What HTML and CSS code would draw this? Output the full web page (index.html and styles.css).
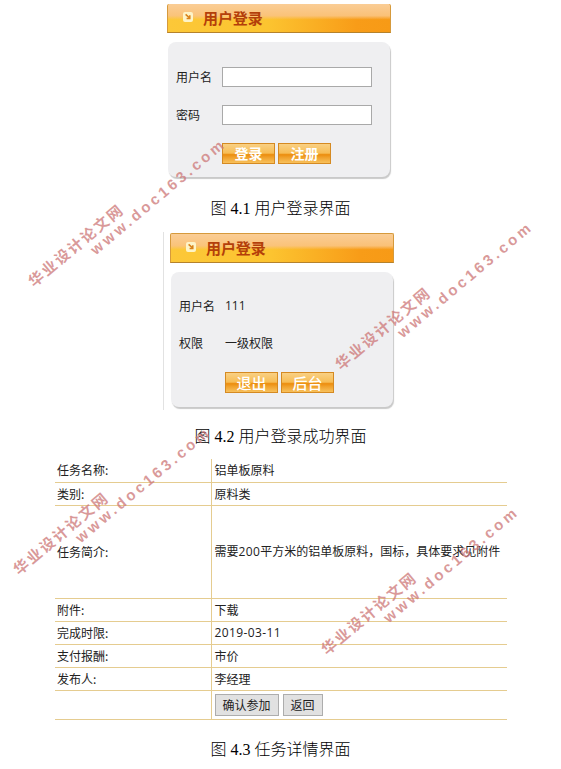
FILE: index.html
```html
<!DOCTYPE html>
<html>
<head>
    <title>用户登录界面</title>
    <link rel="stylesheet" href="styles.css">
</head>
<body>
    <div class="login first">
        <div class="login-head no-top">
            <svg class="head-icon" viewBox="0 0 10 10"><rect width="10" height="10" rx="2" fill="#fdf4c8"/><path d="M2.6 2.4 L6 5.4 M6.8 3.2 V6.6 H3.6" fill="none" stroke="#d9821a" stroke-width="1.5"/></svg>
            <span>用户登录</span>
        </div>
        <div class="panel">
            <div class="row"><label>用户名</label><input type="text"></div>
            <div class="row"><label>密码</label><input type="text"></div>
            <div class="row buttons">
                <button class="btn bold">登录</button>
                <button class="btn bold">注册</button>
            </div>
        </div>
    </div>
    <p class="caption cap1">图 4.1 用户登录界面</p>

    <div class="second-wrap">
        <div class="login">
            <div class="login-head">
                <svg class="head-icon" viewBox="0 0 10 10"><rect width="10" height="10" rx="2" fill="#fdf4c8"/><path d="M2.6 2.4 L6 5.4 M6.8 3.2 V6.6 H3.6" fill="none" stroke="#d9821a" stroke-width="1.5"/></svg>
                <span>用户登录</span>
            </div>
            <div class="panel done">
                <div class="row"><label>用户名</label><span class="num">111</span></div>
                <div class="row"><label>权限</label><span>一级权限</span></div>
                <div class="row buttons">
                    <button class="btn">退出</button>
                    <button class="btn">后台</button>
                </div>
            </div>
        </div>
    </div>
    <p class="caption cap2">图 4.2 用户登录成功界面</p>

    <table class="detail">
        <tr><td class="name">任务名称:</td><td>铝单板原料</td></tr>
        <tr><td class="name">类别:</td><td>原料类</td></tr>
        <tr class="tall"><td class="name">任务简介:</td><td>需要<span class="num">200</span>平方米的铝单板原料，国标，具体要求见附件</td></tr>
        <tr><td class="name">附件:</td><td>下载</td></tr>
        <tr><td class="name">完成时限:</td><td class="num">2019-03-11</td></tr>
        <tr><td class="name">支付报酬:</td><td>市价</td></tr>
        <tr><td class="name">发布人:</td><td>李经理</td></tr>
        <tr class="actions"><td class="name"></td><td><button class="plain">确认参加</button><button class="plain">返回</button></td></tr>
    </table>
    <p class="caption cap3">图 4.3 任务详情界面</p>

    <div class="mark m1"><div class="cn">华业设计论文网</div><div class="en">www.doc163.com</div></div>
    <div class="mark m2"><div class="cn">华业设计论文网</div><div class="en">www.doc163.com</div></div>
    <div class="mark m3"><div class="cn">华业设计论文网</div><div class="en">www.doc163.com</div></div>
    <div class="mark m4"><div class="cn">华业设计论文网</div><div class="en">www.doc163.com</div></div>
</body>
</html>
```

FILE: styles.css
```css
body {
    margin: 0;
    position: relative;
    background: #fff;
    color: #222;
    font-family: "Noto Sans CJK SC", sans-serif;
    font-size: 12px;
    overflow: hidden;
}

.login {
    width: 224px;
}

.first {
    margin: 4px 0 0 167px;
}

.login-head {
    box-sizing: border-box;
    height: 30px;
    display: flex;
    align-items: center;
    padding: 0 0 2px 15px;
    border: 1px solid #d69a3c;
    border-bottom-color: #b5822c;
    border-radius: 2px 2px 0 0;
    background:
        linear-gradient(180deg, rgba(250, 205, 150, 1) 0%, rgba(250, 195, 125, .95) 42%, rgba(250, 190, 90, 0) 56%),
        linear-gradient(90deg, #fcc838 0%, #fcc430 45%, #f89c18 85%, #f79a16 100%);
    color: #b43f0a;
    font-size: 15px;
    font-weight: bold;
    letter-spacing: -.1px;
}

.no-top {
    height: 29px;
    border-top: none;
}

.head-icon {
    width: 10px;
    height: 10px;
    margin-right: 10px;
}

.panel {
    box-sizing: border-box;
    width: 222px;
    margin: 9px 0 0 1px;
    padding: 25px 0 13px 9px;
    display: flex;
    flex-direction: column;
    gap: 18px;
    background: #efeff1;
    border-radius: 8px;
    box-shadow: 1px 2px 1px #c9c9c9;
}

.row {
    display: flex;
    align-items: center;
    height: 20px;
}

.row label {
    width: 45px;
    margin-left: -1px;
    padding: 0 1px 2px 0;
}

.row > span {
    padding-bottom: 2px;
}

.row input {
    box-sizing: border-box;
    width: 150px;
    height: 20px;
    padding: 0;
    background: #fff;
    border: 1px solid #a9a9a9;
}

.buttons {
    height: 21px;
    margin-left: 45px;
    gap: 3px;
}

.btn {
    box-sizing: border-box;
    width: 53px;
    height: 21px;
    padding: 0 0 1px;
    border: 1px solid #d58a22;
    background: linear-gradient(180deg, #f9d084 0%, #f7bd55 48%, #ec8d0e 56%, #f0a02a 70%, #f8c15c 100%);
    color: #fff;
    font-family: "Noto Sans CJK SC", sans-serif;
    font-size: 15px;
    font-weight: 500;
    line-height: 17px;
}

.bold {
    font-size: 14px;
    font-weight: bold;
}

.caption {
    margin: 0;
    height: 20px;
    line-height: 20px;
    text-align: center;
    color: #000;
    font-family: "Liberation Serif", "Noto Sans CJK SC", serif;
    font-size: 16px;
    font-weight: 300;
}

.cap1 {
    padding-top: 22px;
}

.cap2 {
    padding-top: 17px;
}

.cap3 {
    padding-top: 20px;
}

.second-wrap {
    margin: 13px 0 0 163px;
    padding: 1px 0 3px 6px;
    border-left: 1px solid #e2e2e2;
}

.done {
    padding: 24px 0 14px 9px;
    gap: 17px;
}

.done .buttons {
    margin-top: 2px;
}

.num {
    font-family: "Open Sans", sans-serif;
}

.detail {
    width: 452px;
    margin: 12px 0 0 55px;
    border-collapse: collapse;
    table-layout: fixed;
}

.detail td {
    height: 23px;
    padding: 0 0 1px 3px;
    box-sizing: border-box;
    border-bottom: 1px solid #e5cc90;
    border-left: 1px solid #e5cc90;
}

.detail .num {
    letter-spacing: .4px;
}

.detail td.name {
    width: 156px;
    padding-left: 2px;
    border-left: none;
}

.detail .tall td {
    height: 93px;
}

.detail .actions td {
    height: 29px;
    padding-bottom: 0;
}

.plain {
    box-sizing: border-box;
    height: 22px;
    margin-right: 4px;
    padding: 0 7px;
    background: #e1e1e1;
    border: 1px solid #adadad;
    color: #222;
    font-family: "Noto Sans CJK SC", sans-serif;
    font-size: 12px;
    vertical-align: middle;
}

.mark {
    position: absolute;
    transform-origin: 0 0;
    transform: rotate(-40deg);
    width: 260px;
    color: rgba(205, 120, 120, .75);
    font-weight: bold;
    pointer-events: none;
}

.mark .cn {
    height: 16px;
    line-height: 16px;
    font-size: 15px;
    letter-spacing: 2px;
}

.mark .en {
    height: 16px;
    line-height: 16px;
    padding-left: 68px;
    font-family: "Liberation Sans", sans-serif;
    font-size: 15px;
    letter-spacing: 3.3px;
}

.m1 {
    left: 25px;
    top: 277px;
}

.m2 {
    left: 332px;
    top: 360px;
}

.m3 {
    left: 10px;
    top: 565px;
}

.m4 {
    left: 318px;
    top: 645px;
}
```
